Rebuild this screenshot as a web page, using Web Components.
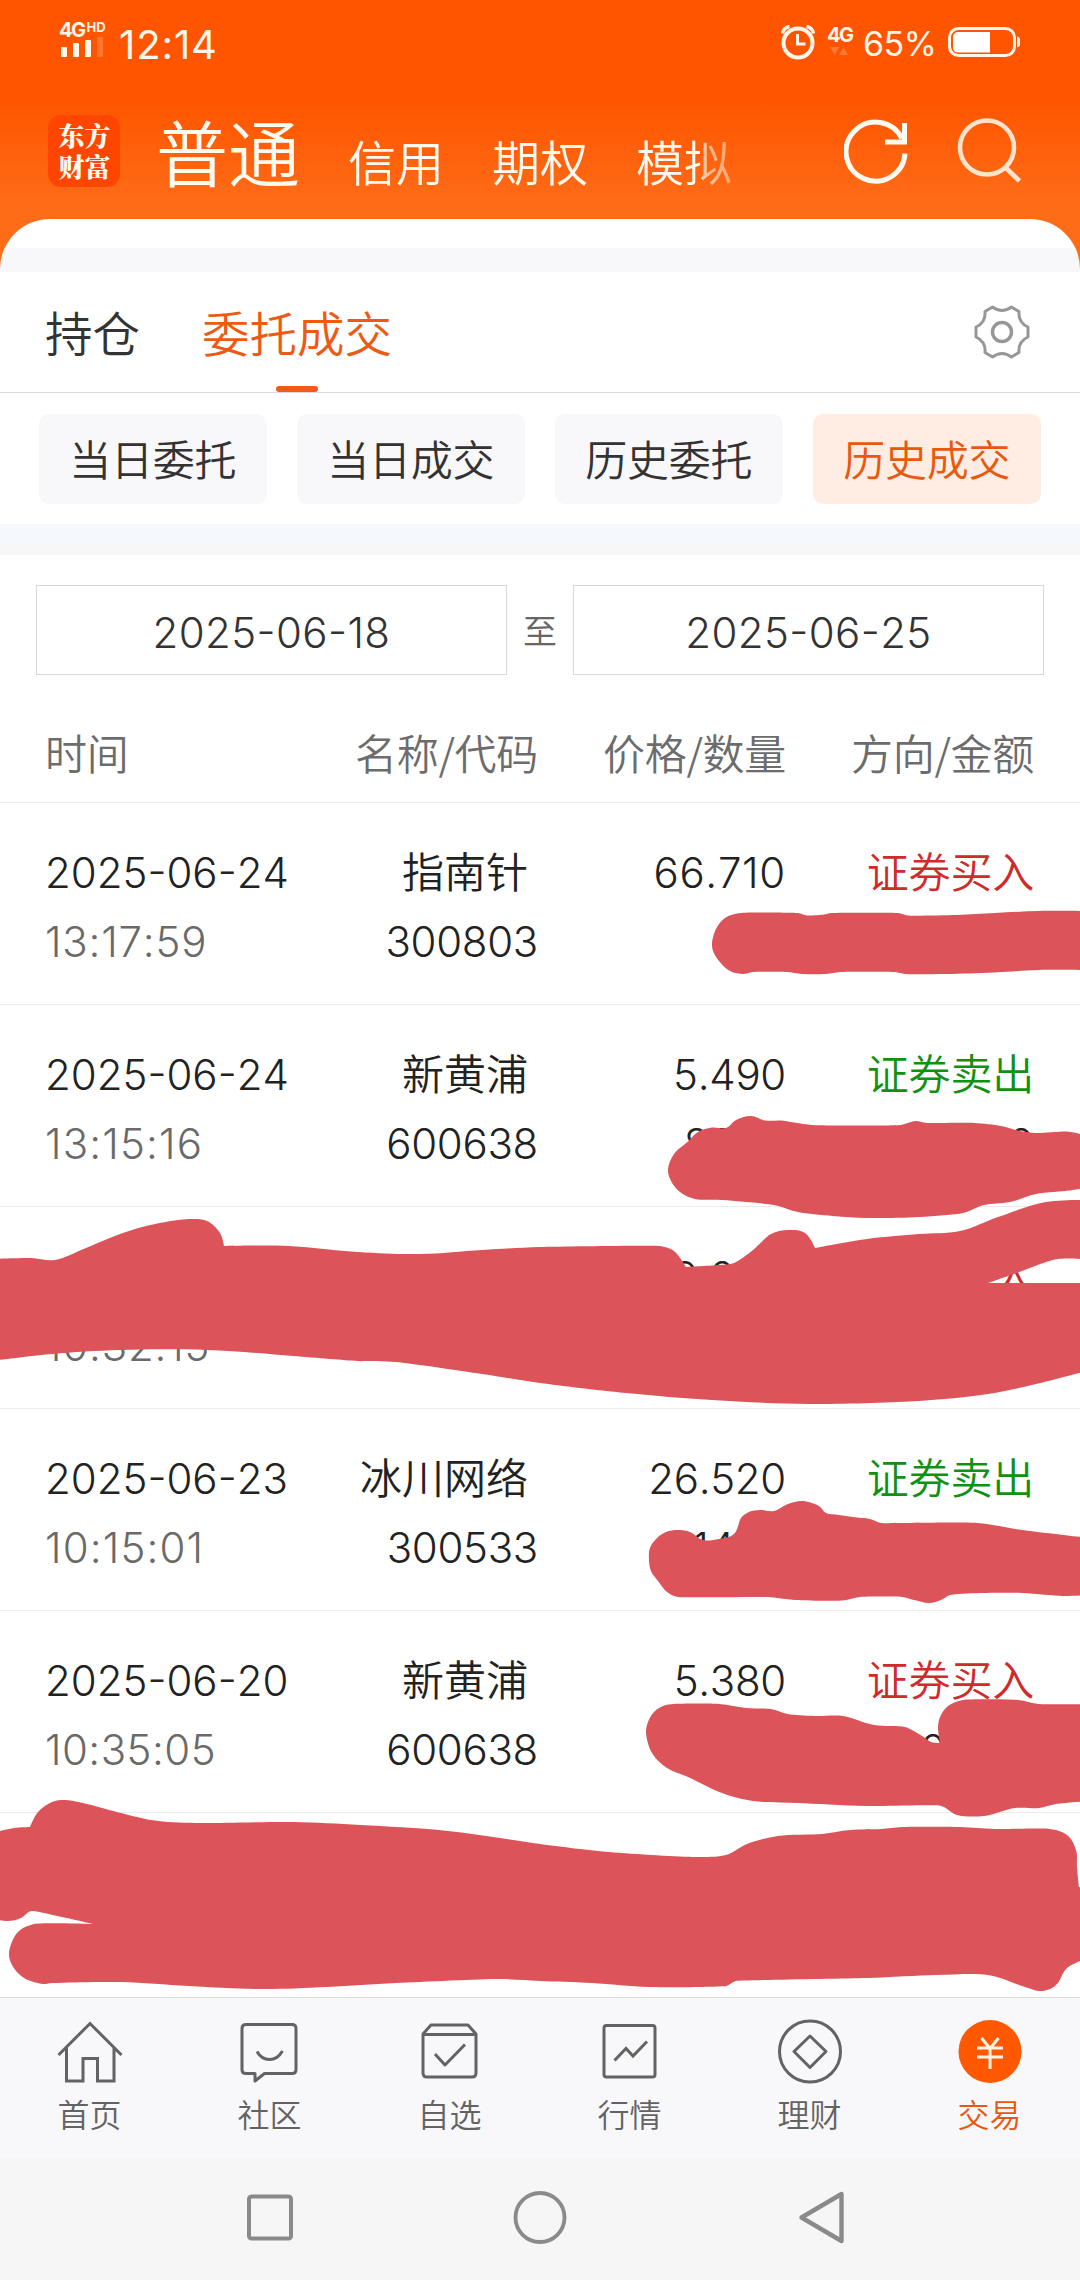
<!DOCTYPE html>
<html lang="zh-CN">
<head>
<meta charset="utf-8">
<title>委托成交</title>
<style>
  html, body {
    margin: 0;
    background: #fff;
  }
  body {
    width: 1080px;
    height: 2280px;
    overflow: hidden;
    position: relative;
    font-family: Inter, "Noto Sans CJK SC", sans-serif;
    font-weight: 350;
    font-kerning: none;
    color: #222;
  }
</style>
</head>
<body>
<trade-app></trade-app>

<script>
const define = (name, html) => {
  const tpl = document.createElement('template');
  tpl.innerHTML = html;
  customElements.define(name, class extends HTMLElement {
    constructor() {
      super();
      this.attachShadow({ mode: 'open' }).appendChild(tpl.content.cloneNode(true));
    }
  });
};

/** Status bar **/

define('status-bar', `
  <style>
    :host {
      display: flex;
      align-items: flex-start;
      box-sizing: border-box;
      height: 100px;
      padding: 0 60px 0 59px;
      color: #fff6ea;
      font-weight: 400;
    }
    svg { display: block; }
    .net { width: 48px; padding-top: 21px; }
    .net div { display: flex; height: 16px; line-height: 18px; font-size: 20px; font-weight: 700; letter-spacing: -1.5px; }
    .net sup { font-size: 13px; line-height: 12px; margin-left: 2px; letter-spacing: 0; }
    .clock { margin-left: 12px; padding-top: 21px; font-size: 40px; line-height: 48px; letter-spacing: .9px; font-feature-settings: "calt" 0; }
    .right { margin-left: auto; display: flex; }
    .data { margin-left: 10px; padding-top: 26px; width: 27px; }
    .data div { font-size: 20px; line-height: 18px; font-weight: 700; letter-spacing: -1.5px; }
    .pct { margin-left: 9px; padding-top: 24px; width: 76px; font-size: 34px; line-height: 40px; letter-spacing: -.6px; }
    .bat { margin: 27px 0 0 9px; }
  </style>
  <div class="net">
    <div>4G<sup>HD</sup></div>
    <svg width="46" height="22" fill="currentColor">
      <rect x="2" y="10" width="6" height="10" rx="1"/>
      <rect x="14" y="6" width="6" height="14" rx="1"/>
      <rect x="26" y="3" width="6" height="17" rx="1"/>
      <rect x="38" y="0" width="6" height="20" rx="1" opacity=".2"/>
    </svg>
  </div>
  <div class="clock">12:14</div>
  <div class="right">
    <svg width="36" height="62" fill="none" stroke="currentColor">
      <circle cx="17" cy="43" r="14.5" stroke-width="4"/>
      <path d="M16.500 34v10h8" stroke-width="3"/>
      <path d="M1.500 33.500q1-6 7-7M32.500 33.500q-1-6-7-7" stroke-width="3.4"/>
    </svg>
    <div class="data">
      <div>4G</div>
      <svg width="24" height="12" fill="currentColor" opacity=".22"><path d="M3 3h9l-4.500 8zM12 11h9l-4.500-8z"/></svg>
    </div>
    <div class="pct">65%</div>
    <svg class="bat" width="72" height="32" fill="none" stroke="currentColor">
      <rect x="1.500" y="1.500" width="65" height="27" rx="9" stroke-width="3"/>
      <path d="M10.500 5H42v20.500H10.500Q5 25.500 5 20V10.500Q5 5 10.500 5z" fill="#fff" stroke="none"/>
      <path d="M69 9.500q3.500 0 3.500 5.500t-3.500 5.500z" fill="currentColor" stroke="none"/>
    </svg>
  </div>
`);

/** Account switcher: logo, account types, actions **/

define('account-bar', `
  <style>
    :host {
      display: flex;
      box-sizing: border-box;
      height: 119px;
      padding: 0 58px 0 48px;
      color: #fffaf0;
    }
    .logo {
      display: flex;
      flex-direction: column;
      margin-top: 15px;
      width: 72px;
      height: 72px;
      box-sizing: border-box;
      padding: 4px 0 0 1px;
      border-radius: 13px;
      background: #ff4600;
      font: 900 26px/31px "Noto Serif CJK SC", "Noto Sans CJK SC", serif;
      text-align: center;
    }
    nav {
      display: flex;
      align-items: baseline;
      gap: 48px;
      width: 590px;
      margin-left: 36px;
      font-size: 48px;
      line-height: 110px;
      white-space: nowrap;
      -webkit-mask-image: linear-gradient(90deg, #000 546px, rgba(0,0,0,.65) 547px, rgba(0,0,0,.4) 580px);
      mask-image: linear-gradient(90deg, #000 546px, rgba(0,0,0,.65) 547px, rgba(0,0,0,.4) 580px);
    }
    nav b { font-size: 72px; font-weight: inherit; }
    .actions { display: flex; gap: 46px; margin: 16px 0 0 auto; }
  </style>
  <div class="logo"><span>东方</span><span>财富</span></div>
  <nav><b>普通</b><span>信用</span><span>期权</span><span>模拟</span></nav>
  <div class="actions">
    <svg width="66" height="74" fill="none" stroke="currentColor" stroke-width="5">
      <path d="M61 37.500A29.500 29.500 0 1 1 58 22.500"/>
      <path d="M60.500 7v19H41"/>
    </svg>
    <svg width="66" height="74" fill="none" stroke="#ffe3cd" stroke-width="4.600">
      <circle cx="31" cy="31.500" r="27"/>
      <path d="M49 51l14.500 14"/>
    </svg>
  </div>
`);

/** Page tabs **/

define('page-tabs', `
  <style>
    :host {
      display: flex;
      align-items: stretch;
      box-sizing: border-box;
      height: 121px;
      padding: 0 50px 0 45px;
      gap: 62px;
      border-bottom: 1px solid #dadada;
      font-size: 47.500px;
      line-height: 125px;
      color: #333;
    }
    .tab { position: relative; height: 120px; }
    .on { color: #ec5a14; }
    .on::after {
      content: "";
      position: absolute;
      left: 50%;
      bottom: 0;
      width: 42px;
      height: 6px;
      margin-left: -21px;
      border-radius: 3px;
      background: #f25a16;
    }
    svg { margin: 32px 0 0 auto; }
  </style>
  <div class="tab">持仓</div>
  <div class="tab on">委托成交</div>
  <svg width="56" height="56" fill="none" stroke="#979797" stroke-width="3">
    <path d="M11 7.500L18.500 3Q28 10 37.500 3L45 7.500Q44 18.500 54 23V33Q44 37.500 45 48.500L37.500 53Q28 46 18.500 53L11 48.500Q12 37.500 2 33V23Q12 18.500 11 7.500z" stroke-linejoin="round"/>
    <circle cx="28" cy="28" r="9.500" stroke-width="3.400"/>
  </svg>
`);

define('filter-chip', `
  <style>
    :host {
      display: block;
      height: 90px;
      border-radius: 10px;
      background: #f8f8fb;
      color: #333;
      font-size: 42px;
      line-height: 94px;
      text-align: center;
      letter-spacing: -.2px;
    }
    :host([active]) { background: #ffede3; color: #e8590f; }
  </style>
  <slot></slot>
`);

define('chip-row', `
  <style>
    :host {
      display: grid;
      grid-template-columns: repeat(4, 1fr);
      gap: 30.500px;
      padding: 21px 39.500px 20px 39px;
    }
  </style>
  <slot></slot>
`);

define('date-range', `
  <style>
    :host {
      display: grid;
      grid-template-columns: 1fr 66px 1fr;
      box-sizing: border-box;
      height: 121px;
      padding: 30px 36px 0;
      font-size: 42px;
      text-align: center;
      line-height: 94px;
    }
    ::slotted(span) { border: 1px solid #d8d8d8; height: 88px; line-height: 93px; color: #333; letter-spacing: .4px; font-feature-settings: "case" 1; }
    i { font-style: normal; font-size: 34px; color: #666; }
  </style>
  <slot name="from"></slot><i>至</i><slot name="to"></slot>
`);

/** Deal table **/

define('deal-head', `
  <style>
    :host {
      display: grid;
      grid-template-columns: 1fr 248px 248px 248px;
      box-sizing: border-box;
      height: 127px;
      padding: 28px 46px 0 45px;
      border-bottom: 1px solid #ededed;
      color: #6c6c6c;
      font-family: "Noto Sans CJK SC", sans-serif;
      font-size: 42px;
      line-height: 96px;
      text-align: right;
      letter-spacing: -.3px;
    }
    ::slotted(:first-child) { text-align: left; }
  </style>
  <slot></slot>
`);

class DealRow extends HTMLElement {
  constructor() {
    super();
    this.attachShadow({ mode: 'open' });
  }

  connectedCallback() {
    const get = (name) => this.getAttribute(name) || '';
    // the narrow "1" pulls a figure together, open it up again
    const ones = (name) => get(name).split('1').length - 1;
    this.shadowRoot.innerHTML = `
      <style>
        :host {
          display: grid;
          grid-template-columns: 1fr 248px 248px 248px;
          grid-template-rows: 69px 69px;
          box-sizing: border-box;
          height: 202px;
          padding: 35px 46px 0 45px;
          border-bottom: 1px solid #ebebeb;
          font-size: 42px;
          line-height: 69px;
          text-align: right;
          white-space: nowrap;
          letter-spacing: -.3px;
        }
        .date, .time { text-align: left; }
        .date { letter-spacing: 0; font-feature-settings: "case" 1; }
        .time { color: #6a6a6a; letter-spacing: ${.1 + ones('time') * .35}px; font-feature-settings: "calt" 0; }
        .name { padding-right: 10px; letter-spacing: 0; }
        .price { letter-spacing: ${-.3 + ones('price')}px; }
        .side { letter-spacing: -.2px; }
        .buy { color: #cf2b2b; }
        .sell { color: #119111; }
      </style>
      <span class="date">${get('date')}</span>
      <span class="name">${get('name')}</span>
      <span class="price">${get('price')}</span>
      <span class="side ${get('side')}">${{ buy: '证券买入', sell: '证券卖出' }[get('side')] || ''}</span>
      <span class="time">${get('time')}</span>
      <span>${get('code')}</span>
      <span>${get('qty')}</span>
      <span>${get('amount')}</span>
    `;
  }
}
customElements.define('deal-row', DealRow);

/** Marker strokes over the private figures **/

const marks = [
  '712,943 716,929 725,918 740,913 798,913 807,915.500 824,914.500 831,913 898,913 908,915.500 957,915 995,913 1039,911 1090,911 1090,970 1039,970 995,972.500 946,974 905,974 895,972 840,972 826,974 802,974 788,972 753,972 743,974 730,971 719,961 713,951',
  '668,1169 674,1154 688,1141.500 698,1132 712,1127.500 726,1128 736,1120 751,1116 765,1120.500 781,1120.500 812,1125 901,1125 915,1121 927,1123 974,1123 1001,1126 1020,1131 1036,1133 1067,1131.500 1080,1134 1090,1136 1090,1187 1070,1190.500 1036,1194 1010,1202 984,1205 963,1213 919,1217 867,1218 833,1216 798,1212 774,1205 722,1200 695,1199 680,1192 671,1181',
  '-9,1259 31,1258 55,1260 86,1248 120,1234 155,1224 189,1219 207,1221 220,1233 224,1246 289,1246 358,1252 420,1254 482,1250 540,1247 660,1246 674,1251 686,1267 719,1265 734,1263 753,1250 771,1234 788,1230 805,1233 815,1248 867,1239 919,1234 960,1231 998,1217 1046,1202 1090,1200 1090,1260 1058,1259 1022,1271 988,1283 1090,1283 1090,1370 1036,1384 988,1394 919,1401 809,1404 712,1400 626,1393 540,1383 482,1374 396,1362 358,1361 293,1356 207,1350 120,1350 52,1354 -9,1361',
  '649,1560 650,1548 657,1538 666,1532 678,1530 690,1532 703,1540 719,1539 734,1534 741,1518 749,1512 760,1510 774,1511 788,1504 803,1501 819,1506 826,1513 839,1515 853,1517 870,1519 881,1523 977,1523 1022,1530 1090,1538 1090,1595 1063,1596 1022,1593 981,1593 950,1595 941,1600 929,1603 914,1600 902,1597 860,1597 843,1600.500 795,1600 767,1597 678,1597 667,1592 658,1581 651,1571',
  '646,1733 648,1722 654,1712 663,1706 674,1704 719,1704 746,1708 771,1709 788,1714 815,1716 843,1716 874,1725 905,1727 922,1736 931,1742 940,1743 938,1728 940,1717 948,1706 963,1700 1018,1700 1039,1704 1090,1704 1090,1801 1056,1804 1039,1808 1015,1808 984,1816 957,1815 941,1806 867,1806 798,1803 753,1801 722,1793 688,1777 667,1768 652,1753',
  '-9,1834 0,1831 14,1828 30,1827 38,1812 52,1802 65,1800 83,1803 151,1820 196,1823 293,1822 361,1825 448,1831 540,1844 609,1852 695,1857 726,1855 747,1844 778,1836 822,1834 850,1830 881,1829 902,1827 960,1827 995,1829 1050,1829 1067,1835 1076,1850 1077,1867 1079,1887 1090,1890 1090,1957 1067,1968 1058,1983 1050,1989 1039,1991 1022,1986 988,1975 936,1975 867,1978 736,1981 726,1986 650,1987 592,1983 540,1981 499,1979 396,1983 327,1987 258,1989 189,1986 120,1982 52,1983 43,1984 24,1978 12,1965 9,1953 17,1933 34,1924 93,1924 62,1917 31,1911 21,1918 7,1921 -9,1918'
];

// Closed smooth outline; a sharp turn keeps its corner.
const outline = (str) => {
  const pts = str.split(' ').map((p) => p.split(',').map(Number));
  const n = pts.length;
  const handles = pts.map((p, i) => {
    const a = pts[(i + n - 1) % n], b = pts[(i + 1) % n];
    const l1 = Math.hypot(p[0] - a[0], p[1] - a[1]);
    const l2 = Math.hypot(b[0] - p[0], b[1] - p[1]);
    const u = [(p[0] - a[0]) / l1, (p[1] - a[1]) / l1];
    const v = [(b[0] - p[0]) / l2, (b[1] - p[1]) / l2];
    if (u[0] * v[0] + u[1] * v[1] < .62) return [0, 0];
    // the shorter side sets the reach, so long flat runs stay flat
    const t = [u[0] + v[0], u[1] + v[1]];
    const k = Math.min(l1, l2) * .36 / Math.hypot(t[0], t[1]);
    return [t[0] * k, t[1] * k];
  });
  let d = `M${pts[0]}`;
  for (let i = 0; i < n; i++) {
    const j = (i + 1) % n;
    const [p, q] = [pts[i], pts[j]];
    d += `C${p[0] + handles[i][0]},${p[1] + handles[i][1]} ${q[0] - handles[j][0]},${q[1] - handles[j][1]} ${q}`;
  }
  return d + 'z';
};

define('marker-layer', `
  <style>
    :host { position: absolute; left: 0; top: 0; width: 1080px; height: 2280px; pointer-events: none; }
    svg { display: block; }
  </style>
  <svg width="1080" height="2280" fill="#dc545a">${marks.map((m) => `<path d="${outline(m)}"/>`).join('')}</svg>
`);

/** Bottom navigation **/

define('nav-item', `
  <style>
    :host {
      display: flex;
      flex-direction: column;
      align-items: center;
      padding: 21px 1px 0 0;
      color: #636363;
      font-size: 32px;
      line-height: 44px;
    }
    :host([active]) { color: #e8590f; }
    ::slotted(svg) { display: block; margin-bottom: 9px; }
  </style>
  <slot name="icon"></slot>
  <slot></slot>
`);

define('bottom-nav', `
  <style>
    :host {
      display: grid;
      grid-template-columns: repeat(6, 1fr);
      box-sizing: border-box;
      height: 161px;
      border-top: 1px solid #dcdcdc;
      background: #f8f8fb;
    }
  </style>
  <slot></slot>
`);

define('system-nav', `
  <style>
    :host {
      display: flex;
      justify-content: center;
      align-items: center;
      gap: 210px;
      height: 122px;
      background: #f6f6f6;
    }
    svg { display: block; margin-top: -5px; }
  </style>
  <svg width="60" height="60" fill="none" stroke="#8a8a8a" stroke-width="4"><rect x="9" y="9.500" width="42" height="42" rx="2.500"/></svg>
  <svg width="60" height="60" fill="none" stroke="#8a8a8a" stroke-width="3.800"><circle cx="30" cy="30.500" r="24.500"/></svg>
  <svg width="60" height="60" fill="none" stroke="#8a8a8a" stroke-width="4.400" stroke-linejoin="round" overflow="visible"><path d="M21.500 30.500L61.500 7v47z"/></svg>
`);

/** Page **/

define('trade-app', `
  <style>
    :host { display: block; height: 2280px; }
    header {
      height: 272px;
      background: linear-gradient(#ff5500 100px, #ff6c18 205px, #ff6c18);
    }
    .sheet {
      height: 53px;
      border-radius: 50px 50px 0 0;
      background: linear-gradient(#fff 29px, #f8f8fb 29px);
    }
    .band {
      height: 31px;
      background: linear-gradient(#f5f8fc 19px, #f7f7f7 19px);
    }
    main { height: 1725px; overflow: hidden; background: #fff; }
  </style>
  <header>
    <status-bar></status-bar>
    <account-bar></account-bar>
    <div class="sheet"></div>
  </header>
  <main>
    <page-tabs></page-tabs>
    <chip-row>
      <filter-chip>当日委托</filter-chip>
      <filter-chip>当日成交</filter-chip>
      <filter-chip>历史委托</filter-chip>
      <filter-chip active>历史成交</filter-chip>
    </chip-row>
    <div class="band"></div>
    <date-range>
      <span slot="from">2025-06-18</span>
      <span slot="to">2025-06-25</span>
    </date-range>
    <deal-head><span>时间</span><span>名称/代码</span><span>价格/数量</span><span>方向/金额</span></deal-head>
    <deal-row date="2025-06-24" time="13:17:59" name="指南针" code="300803" price="66.710" side="buy"></deal-row>
    <deal-row date="2025-06-24" time="13:15:16" name="新黄浦" code="600638" price="5.490" side="sell" qty="8000" amount="0"></deal-row>
    <deal-row time="10:32:15" price="9.080" side="buy"></deal-row>
    <deal-row date="2025-06-23" time="10:15:01" name="冰川网络" code="300533" price="26.520" side="sell" qty="1400"></deal-row>
    <deal-row date="2025-06-20" time="10:35:05" name="新黄浦" code="600638" price="5.380" side="buy" amount="00.00"></deal-row>
  </main>
  <bottom-nav>
    <nav-item>
      <svg slot="icon" width="66" height="66" fill="none" stroke="#636363" stroke-width="3">
        <path d="M1.500 36L33 4.500 64.500 36M9.500 29v33H26V39.500h14.500V62H57V29"/>
      </svg>首页
    </nav-item>
    <nav-item>
      <svg slot="icon" width="66" height="66" fill="none" stroke="#636363" stroke-width="3" stroke-linejoin="round">
        <path d="M9 5.500h46q4 0 4 4v41q0 4-4 4H27.500L18 62v-7.500H9q-4 0-4-4v-41q0-4 4-4z"/>
        <path d="M20 32.500q4.500 8 12.500 8t13-8.500"/>
      </svg>社区
    </nav-item>
    <nav-item>
      <svg slot="icon" width="66" height="66" fill="none" stroke="#636363" stroke-width="3" stroke-linejoin="round">
        <path d="M6 15l8-9h37l8 9v39q0 4-4 4H10q-4 0-4-4zM6 15.500h53"/>
        <path d="M18 35l10 11 20-20.500"/>
      </svg>自选
    </nav-item>
    <nav-item>
      <svg slot="icon" width="66" height="66" fill="none" stroke="#636363" stroke-width="3">
        <rect x="7" y="6.500" width="51" height="51.500" rx="2.500"/>
        <path d="M17.500 41.500l11.500-12 7 7.500 14-14.500"/>
      </svg>行情
    </nav-item>
    <nav-item>
      <svg slot="icon" width="66" height="66" fill="none" stroke="#636363" stroke-width="3" stroke-linejoin="round">
        <circle cx="33" cy="32.500" r="30.500"/>
        <path d="M33 17l16 15.500-16 16-16-16z"/>
      </svg>理财
    </nav-item>
    <nav-item active>
      <svg slot="icon" width="66" height="66" fill="none" stroke="#fff3e2" stroke-width="3">
        <circle cx="33" cy="32.500" r="31.500" fill="#ff5800" stroke="none"/>
        <path d="M24.500 19l8.500 10.500L41.500 19M20 29h26M20 38h26M33 29v21"/>
      </svg>交易
    </nav-item>
  </bottom-nav>
  <system-nav></system-nav>
  <marker-layer></marker-layer>
`);
</script>
</body>
</html>
